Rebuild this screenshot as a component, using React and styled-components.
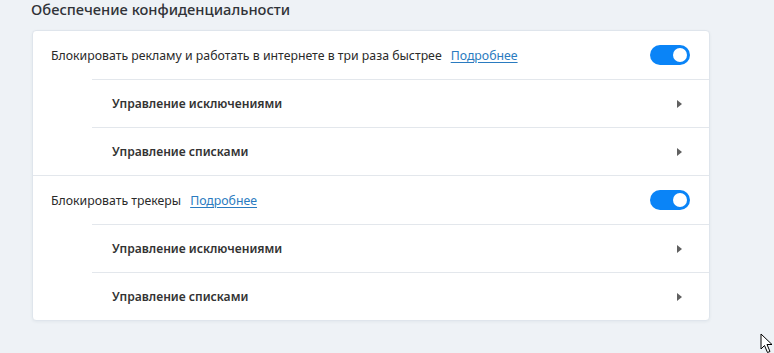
import React from "react";
import styled, { createGlobalStyle } from "styled-components";

const GlobalStyle = createGlobalStyle`
  body {
    margin: 0;
    background: #eef2f6;
    font-family: "Noto Sans", "Open Sans", sans-serif;
    color: #222;
  }
`;

const sections = [
  {
    title: "Блокировать рекламу и работать в интернете в три раза быстрее",
    items: ["Управление исключениями", "Управление списками"],
  },
  {
    title: "Блокировать трекеры",
    items: ["Управление исключениями", "Управление списками"],
  },
];

const App = () => {
  return (
    <Page>
      <GlobalStyle />
      <Heading>Обеспечение конфиденциальности</Heading>
      <Card>
        {sections.map((section, i) => (
          <Section key={i} first={i === 0}>
            <MainRow>
              <Label>
                {section.title}
                <Link href="#">Подробнее</Link>
              </Label>
              <Toggle>
                <Knob />
              </Toggle>
            </MainRow>
            {section.items.map((item) => (
              <SubRow key={item}>
                <SubLabel>{item}</SubLabel>
                <Arrow />
              </SubRow>
            ))}
          </Section>
        ))}
      </Card>
      <Cursor width="14" height="21" viewBox="0 0 14 21">
        <path
          d="M1 1 L1 16 L4.5 12.5 L7.5 19.5 L10 18.5 L7 11.5 L12 11.5 Z"
          fill="#fff"
          stroke="#000"
          strokeWidth="1"
          strokeLinejoin="round"
        />
      </Cursor>
    </Page>
  );
};

const Page = styled.div`
  position: relative;
  height: 353px;
  padding: 0 64px 0 32px;
  overflow: hidden;
`;
const Heading = styled.div`
  font-size: 14.7px;
  font-weight: 500;
  color: #303338;
  margin-left: -1px;
  margin-top: -1px;
  height: 31px;
  line-height: 20px;
`;
const Card = styled.div`
  width: 678px;
  background: #fff;
  border: 1px solid #dfe5ec;
  border-radius: 4px;
  box-sizing: border-box;
  box-shadow: 0 1px 3px rgba(40, 60, 90, 0.06);
`;
const Section = styled.div`
  border-top: ${(p) => (p.first ? "none" : "1px solid #e3e7ec")};
`;
const MainRow = styled.div`
  display: flex;
  align-items: center;
  justify-content: space-between;
  height: 48px;
  padding: 0 19px 0 18px;
`;
const Label = styled.div`
  font-size: 12.3px;
  color: #2a2a2a;
`;
const Link = styled.a`
  color: #2a7bc0;
  margin-left: 9px;
  text-decoration: underline;
  text-underline-offset: 2px;
`;
const Toggle = styled.div`
  width: 40px;
  height: 20px;
  border-radius: 10px;
  background: #0a84f7;
  display: flex;
  align-items: center;
  justify-content: flex-end;
  padding: 0 3px;
  box-sizing: border-box;
`;
const Knob = styled.div`
  width: 14px;
  height: 14px;
  border-radius: 50%;
  background: #fff;
`;
const SubRow = styled.div`
  display: flex;
  align-items: center;
  justify-content: space-between;
  height: 48px;
  margin-left: 59px;
  padding: 0 27px 0 20px;
  border-top: 1px solid #e3e7ec;
  box-sizing: border-box;
`;
const SubLabel = styled.div`
  font-size: 12.1px;
  font-weight: 600;
  color: #333;
`;
const Arrow = styled.div`
  width: 0;
  height: 0;
  border-top: 4px solid transparent;
  border-bottom: 4px solid transparent;
  border-left: 5px solid #606060;
`;
const Cursor = styled.svg`
  position: absolute;
  left: 760px;
  top: 333px;
`;

export default App;
